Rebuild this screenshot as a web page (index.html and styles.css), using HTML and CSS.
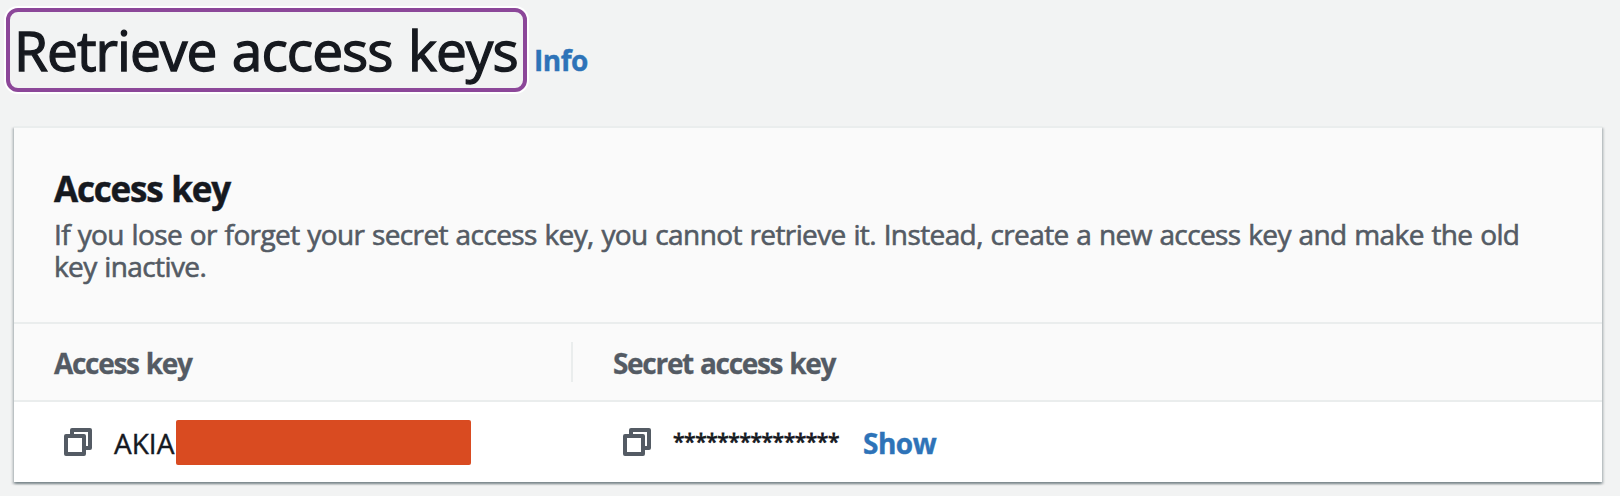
FILE: index.html
```html
<!DOCTYPE html>
<html lang="en">
<head>
<meta charset="utf-8">
<title>Retrieve access keys</title>
<link rel="stylesheet" href="styles.css">
</head>
<body>
<header class="page-header">
  <h1 class="page-title">Retrieve access keys</h1>
  <a class="link info">Info</a>
</header>
<section class="card">
  <div class="card-header">
    <h2 class="card-title">Access key</h2>
    <p class="description">If you lose or forget your secret access key, you cannot retrieve it. Instead, create a new access key and make the old key inactive.</p>
  </div>
  <div class="row head">
    <div class="cell">Access key</div>
    <div class="divider"></div>
    <div class="cell">Secret access key</div>
  </div>
  <div class="row values">
    <div class="cell value">
      <svg class="copy" viewBox="0 0 28 28"><path d="M8 6V2h18v18h-5M2 8h18v18H2z"/></svg>
      <span class="key">AKIA</span><span class="redaction"></span>
    </div>
    <div class="divider hidden"></div>
    <div class="cell value">
      <svg class="copy" viewBox="0 0 28 28"><path d="M8 6V2h18v18h-5M2 8h18v18H2z"/></svg>
      <span class="stars">***************</span>
      <a class="link show">Show</a>
    </div>
  </div>
</section>
</body>
</html>
```
FILE: styles.css
```css
* { box-sizing: border-box; }
body {
  margin: 0;
  height: 496px;
  overflow: hidden;
  background: #f2f3f3;
  color: #16191f;
  font: 28px/32px "Open Sans", "Noto Sans", sans-serif;
  padding: 8px 18px 0 6px;
}
h1, h2, p { margin: 0; }
.page-header { display: flex; align-items: baseline; height: 84px; }
.page-title {
  width: 521px;
  height: 84px;
  padding-left: 4px;
  border: 4px solid #8c4799;
  border-radius: 12px;
  box-shadow: 0 0 0 2px #fff;
  font-size: 55px;
  line-height: 76px;
  font-weight: 400;
  letter-spacing: -.95px;
  word-spacing: 2px;
  -webkit-text-stroke: 1.3px currentColor;
  white-space: nowrap;
}
.link { color: #2e73b8; font-weight: 700; letter-spacing: -.5px; -webkit-text-stroke: .4px currentColor; }
.info { margin-left: 7px; }
.card {
  margin: 34px 0 0 8px;
  border-top: 2px solid #eaeded;
  background: #fff;
  box-shadow: 0 2px 2px 0 rgba(0, 28, 36, .3), 2px 2px 2px 0 rgba(0, 28, 36, .15), -2px 2px 2px 0 rgba(0, 28, 36, .15);
}
.card-header {
  height: 196px;
  padding: 39px 40px 39px;
  background: #fafafa;
  border-bottom: 2px solid #eaeded;
}
.card-title { font-size: 35px; line-height: 44px; font-weight: 700; letter-spacing: -1.2px; word-spacing: 1px; -webkit-text-stroke: .5px currentColor; }
.description { margin-top: 7px; color: #545b64; letter-spacing: -.605px; word-spacing: 1px; -webkit-text-stroke: .6px currentColor; }
.row { display: flex; align-items: center; }
.head {
  height: 78px;
  background: #fafafa;
  border-bottom: 2px solid #eaeded;
  color: #545b64;
  font-weight: 700;
  letter-spacing: -1.3px;
  word-spacing: 1px;
  -webkit-text-stroke: .3px currentColor;
}
.head .cell { padding-top: 2px; }
.values { height: 80px; }
.cell { padding-left: 40px; }
.cell:first-child { width: 557px; }
.divider { width: 2px; height: 40px; background: #eaeded; }
.hidden { visibility: hidden; }
.value { display: flex; align-items: center; padding-left: 50px; }
.copy { width: 28px; height: 28px; fill: none; stroke: #545b64; stroke-width: 4; stroke-linejoin: round; }
.key { width: 62px; margin-left: 22px; padding-top: 1px; -webkit-text-stroke: .4px currentColor; }
.redaction { width: 295px; height: 45px; border-radius: 2px; background: #d94b21; }
.stars {
  margin-left: 22px;
  width: 166px;
  padding-bottom: 2px;
  font-size: 21px;
  letter-spacing: -.5px;
  -webkit-text-stroke: .8px currentColor;
}
.show { margin-left: 24px; padding-top: 1px; }
```
